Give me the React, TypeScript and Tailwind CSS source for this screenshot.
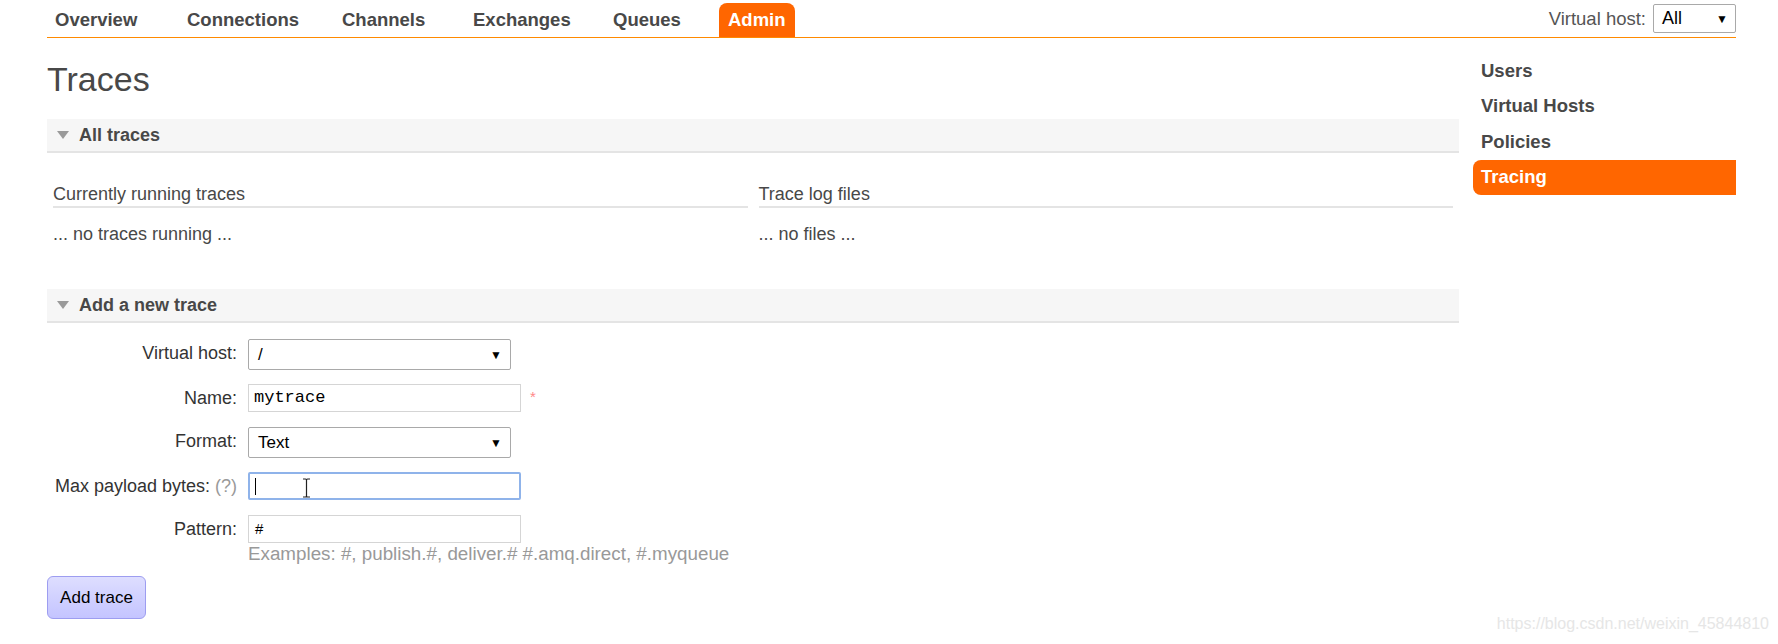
import React from 'react';

const navItems = [
  { name: 'Overview', w: 'w-[132px]' },
  { name: 'Connections', w: 'w-[155px]' },
  { name: 'Channels', w: 'w-[131px]' },
  { name: 'Exchanges', w: 'w-[140px]' },
  { name: 'Queues', w: 'w-[106px]' },
];
const sideItems = ['Users', 'Virtual Hosts', 'Policies'];

function Triangle() {
  return (
    <svg width="12" height="9" viewBox="0 0 12 9" className="mr-[10px]">
      <path d="M0 0 L12 0 L6 8 Z" fill="#9a9a9a" />
    </svg>
  );
}

function SectionBar({ title }: { title: string }) {
  return (
    <div className="flex h-[34px] items-center bg-[#f6f6f6] border-b-2 border-[#e4e4e4] pl-[10px]">
      <Triangle />
      <span className="text-[18px] font-bold text-[#484848]">{title}</span>
    </div>
  );
}

function Select({ value }: { value: string }) {
  return (
    <div className="flex h-[31px] w-[263px] items-center justify-between rounded-[2px] border border-[#a9a9a9] bg-white pl-[9px] pr-[8px] text-[17px] text-black">
      <span>{value}</span>
      <span className="text-[12px]">▼</span>
    </div>
  );
}

function FormRow({ label, children, mt }: { label: React.ReactNode; children: React.ReactNode; mt: string }) {
  return (
    <div className={`flex items-start ${mt}`}>
      <div className="w-[201px] pr-[11px] text-right text-[18px] text-[#333] leading-[29px] whitespace-nowrap">{label}</div>
      <div className="flex flex-col">{children}</div>
    </div>
  );
}

export default function App() {
  return (
    <div className="relative h-[644px] w-[1778px] overflow-hidden bg-white font-['Liberation_Sans',sans-serif] text-[#484848]">
      <div className="mx-[47px] w-[1689px]">
        {/* top nav */}
        <div className="flex h-[38px] items-end justify-between border-b border-[#ff8a00]">
          <ul className="flex items-end pl-[8px]">
            {navItems.map((item) => (
              <li key={item.name} className={`flex h-[34px] items-center text-[18.5px] font-bold text-[#484848] ${item.w}`}>
                {item.name}
              </li>
            ))}
            <li className="flex h-[34px] items-center rounded-t-[8px] bg-[#ff6600] px-[9px] text-[18.5px] font-bold text-white">Admin</li>
          </ul>
          <div className="flex items-center self-start pt-[4px]">
            <span className="mr-[7px] text-[18.5px] text-[#555]">Virtual host:</span>
            <div className="flex h-[29px] w-[83px] items-center justify-between rounded-[2px] border border-[#a9a9a9] bg-white pl-[8px] pr-[7px] text-[18px] text-black">
              <span>All</span>
              <span className="text-[12px]">▼</span>
            </div>
          </div>
        </div>

        <div className="flex">
          {/* main column */}
          <div className="w-[1412px]">
            <h1 className="mt-[21px] mb-[20px] text-[34px] leading-[40px] text-[#484848]">Traces</h1>

            <SectionBar title="All traces" />
            <div className="mt-[31px] flex gap-[11px] px-[6px]">
              <div className="w-[695px]">
                <div className="border-b-2 border-[#e4e4e4] pb-[1px] text-[18px] leading-[21px]">Currently running traces</div>
                <div className="mt-[16px] text-[18px] leading-[21px]">... no traces running ...</div>
              </div>
              <div className="w-[695px]">
                <div className="border-b-2 border-[#e4e4e4] pb-[1px] text-[18px] leading-[21px]">Trace log files</div>
                <div className="mt-[16px] text-[18px] leading-[21px]">... no files ...</div>
              </div>
            </div>

            <div className="mt-[44px]">
              <SectionBar title="Add a new trace" />
            </div>

            <div>
              <FormRow label="Virtual host:" mt="mt-[16px]">
                <Select value="/" />
              </FormRow>
              <FormRow label="Name:" mt="mt-[14px]">
                <div className="flex items-start">
                  <div className="flex h-[28px] w-[273px] items-center border border-[#d5d5d5] bg-white pl-[5px] font-['Liberation_Mono',monospace] text-[17px] text-black">
                    mytrace
                  </div>
                  <span className="ml-[9px] mt-[2px] text-[15px] text-[#f88]">*</span>
                </div>
              </FormRow>
              <FormRow label="Format:" mt="mt-[14px]">
                <Select value="Text" />
              </FormRow>
              <FormRow
                label={
                  <span>
                    Max payload bytes: <span className="text-[#999]">(?)</span>
                  </span>
                }
                mt="mt-[14px]"
              >
                <div className="relative flex h-[28px] w-[273px] items-center rounded-[2px] border-2 border-[#8fb3ea] bg-white pl-[5px]">
                  <span className="h-[17px] w-[1px] bg-black" />
                  <svg className="absolute left-[52px] top-[4px]" width="9" height="20" viewBox="0 0 9 20">
                    <path d="M1 1 H3.5 Q4.5 1 4.5 2 V18 Q4.5 19 3.5 19 H1 M8 1 H5.5 Q4.5 1 4.5 2 M4.5 18 Q4.5 19 5.5 19 H8" stroke="#222" strokeWidth="1.2" fill="none" />
                  </svg>
                </div>
              </FormRow>
              <FormRow label="Pattern:" mt="mt-[14px]">
                <div className="flex h-[28px] w-[273px] items-center border border-[#d5d5d5] bg-white pl-[6px] text-[15px] text-black">#</div>
                <div className="text-[18.8px] leading-[22px] text-[#999]">Examples: #, publish.#, deliver.# #.amq.direct, #.myqueue</div>
              </FormRow>
              <button className="mt-[11px] h-[43px] w-[99px] rounded-[6px] border border-[#9d9df0] bg-gradient-to-b from-[#dedeff] to-[#c4c4ff] text-[17px] text-black">
                Add trace
              </button>
            </div>
          </div>

          {/* side nav */}
          <div className="ml-[14px] flex-1 pt-[15px]">
            {sideItems.map((item) => (
              <div key={item} className="flex h-[35.5px] items-center pl-[8px] text-[18.5px] font-bold text-[#484848]">
                {item}
              </div>
            ))}
            <div className="flex h-[35px] items-center rounded-l-[8px] bg-[#ff6600] pl-[8px] text-[18.5px] font-bold text-white">Tracing</div>
          </div>
        </div>
      </div>

      <div className="absolute bottom-[8px] right-[9px] text-[16px] text-[#e6e6e6]">https://blog.csdn.net/weixin_45844810</div>
    </div>
  );
}
